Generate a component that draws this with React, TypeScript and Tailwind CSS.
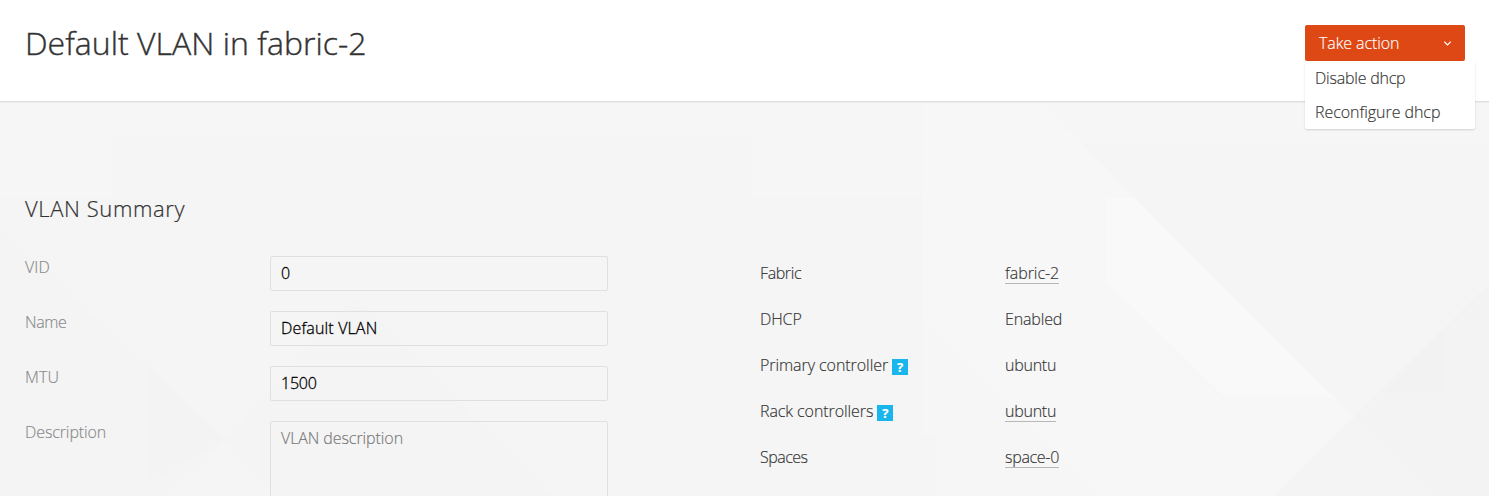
import type { ReactNode } from "react";

function Backdrop() {
  return (
    <svg className="absolute inset-0 h-full w-full" viewBox="0 0 1489 394" preserveAspectRatio="none" aria-hidden="true">
      <rect width="1489" height="394" fill="#f5f5f5" />
      <path d="M0 0H922V96H752V33H112V96H0Z" fill="#f6f6f6" />
      <path d="M0 128L225 338L160 394H0Z" fill="#f4f4f4" />
      <path d="M148 264L225 338L148 382Z" fill="#f3f3f3" />
      <path d="M356 196L225 338L282 394H552Z" fill="#f4f4f4" />
      <path d="M922 0H1040L1432 394H1100L937 232L922 218Z" fill="#f7f7f7" />
      <path d="M922 218L937 232L1100 394H937V333H922Z" fill="#f6f6f6" />
      <path d="M1107 96H1134L1333 295H1225L1107 180Z" fill="#f9f9f9" />
      <path d="M1040 0H1489V42H1082Z" fill="#f6f6f6" />
      <path d="M1489 182L1354 315L1432 394H1489Z" fill="#f3f3f3" />
      <path d="M1443 228L1385 291H1443Z" fill="#f2f2f2" />
      <path d="M1354 315L1275 394H1432Z" fill="#f4f4f4" />
    </svg>
  );
}

function Field({ label, spacing, children }: { label: string; spacing: string; children: ReactNode }) {
  return (
    <div className="flex items-start">
      <label className={`w-[245px] text-[16px] leading-[22px] text-[#888] ${spacing}`}>{label}</label>
      {children}
    </div>
  );
}

const inputClass =
  "block h-[35px] w-[338px] rounded-[2px] border border-[#e0e0e0] bg-transparent px-[10px] pb-[2px] text-[16px] leading-[22px] font-light text-black outline-none [-webkit-text-stroke:0.3px]";

function Help() {
  return (
    <span className="ml-1 mt-[5px] flex h-4 w-4 items-center justify-center bg-[#19b6ee] text-[13px] leading-4 font-bold text-white">?</span>
  );
}

function Row({ label, spacing, help, children }: { label: string; spacing: string; help?: boolean; children: ReactNode }) {
  return (
    <div className="flex h-[46px] items-start">
      <dt className="flex w-[245px]">
        <span className={spacing}>{label}</span>
        {help && <Help />}
      </dt>
      <dd>{children}</dd>
    </div>
  );
}

function Link({ spacing, children }: { spacing: string; children: ReactNode }) {
  return (
    <a href="#" className={`block h-[22px] border-b border-[#b8b8b8] ${spacing}`}>{children}</a>
  );
}

export default function App() {
  return (
    <div className="flex h-[496px] w-[1489px] flex-col overflow-hidden bg-[#f5f5f5] font-['Open_Sans','Noto_Sans',sans-serif] font-light text-[#333] [-webkit-text-stroke:0.15px]">
      <header className="relative z-10 flex h-[102px] shrink-0 items-start justify-between border-b border-[#dfdfdf] bg-white pr-6 pl-[25px] shadow-[0_1px_0_#ececec]">
        <h1 className="mt-[23px] text-[32px] leading-[40px] tracking-[0.03px] whitespace-nowrap [-webkit-text-stroke:0.4px]">Default VLAN in fabric-2</h1>
        <div className="relative mt-[25px] w-40">
          <button className="flex h-9 w-40 items-center justify-between rounded-[2px] bg-[#dd4814] pr-[14px] pl-[14px] text-[16px] tracking-[-0.1px] text-white">
            Take action
            <svg width="7" height="5" viewBox="0 0 7 5" fill="none" stroke="white" strokeWidth="1.2">
              <path d="M.3.7L3.5 3.9L6.7.7" />
            </svg>
          </button>
          <ul className="absolute top-9 left-0 w-[170px] rounded-[2px] bg-white text-[16px] leading-[34px] shadow-[0_1px_2px_rgba(0,0,0,0.15)]">
            <li className="px-[10px] tracking-[-0.22px]">Disable dhcp</li>
            <li className="px-[10px] tracking-[-0.05px]">Reconfigure dhcp</li>
          </ul>
        </div>
      </header>

      <main className="relative h-[394px]">
        <Backdrop />
        <div className="relative px-[25px] pt-[90px]">
          <h2 className="h-[64px] text-[22px] leading-[32px] tracking-[0.6px] [-webkit-text-stroke:0.2px]">VLAN Summary</h2>
          <div className="flex">
            <form className="flex w-[735px] flex-col gap-5">
              <Field label="VID" spacing="tracking-[0.1px]">
                <input className={`${inputClass} tracking-[-0.2px]`} defaultValue="0" />
              </Field>
              <Field label="Name" spacing="tracking-[-0.35px]">
                <input className={`${inputClass} tracking-[0.15px]`} defaultValue="Default VLAN" />
              </Field>
              <Field label="MTU" spacing="tracking-[0.1px]">
                <input className={`${inputClass} tracking-[-0.2px]`} defaultValue="1500" />
              </Field>
              <Field label="Description" spacing="tracking-[-0.1px]">
                <textarea
                  className="block h-[120px] w-[338px] resize-none rounded-[2px] border border-[#e0e0e0] bg-transparent px-[10px] pt-[5px] text-[16px] leading-[22px] font-light tracking-[-0.08px] outline-none placeholder:text-[#777]"
                  placeholder="VLAN description"
                />
              </Field>
            </form>
            <dl className="pt-[6px] text-[16px] leading-[22px]">
              <Row label="Fabric" spacing="tracking-[-0.4px]"><Link spacing="tracking-[-0.05px]">fabric-2</Link></Row>
              <Row label="DHCP" spacing="tracking-[-0.1px]"><span className="tracking-[-0.15px]">Enabled</span></Row>
              <Row label="Primary controller" spacing="tracking-[-0.06px]" help><span className="tracking-[-0.25px]">ubuntu</span></Row>
              <Row label="Rack controllers" spacing="tracking-[-0.08px]" help><Link spacing="tracking-[-0.25px]">ubuntu</Link></Row>
              <Row label="Spaces" spacing="tracking-[-0.5px]"><Link spacing="tracking-[-0.3px]">space-0</Link></Row>
            </dl>
          </div>
        </div>
      </main>
    </div>
  );
}
